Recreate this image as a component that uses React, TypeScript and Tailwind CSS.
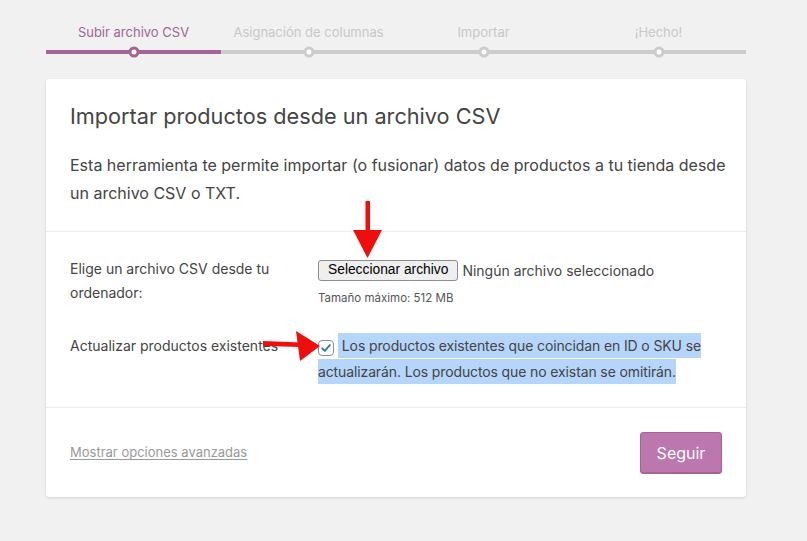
const steps = ["Subir archivo CSV", "Asignación de columnas", "Importar", "¡Hecho!"];

function Steps() {
  return (
    <div className="ml-[46px] grid w-[700px] grid-cols-4">
      {steps.map((label, i) => {
        const active = i === 0;
        return (
          <div key={label} className="flex flex-col">
            <span
              className={
                "text-center text-[13px] leading-[16px] " +
                (active ? "text-[#a46497]" : "text-[#c8c8c8]")
              }
            >
              {label}
            </span>
            <div className={"relative mt-[10px] h-[4px] " + (active ? "bg-[#a46497]" : "bg-[#cccccc]")}>
              <span
                className={
                  "absolute left-1/2 top-1/2 h-[11px] w-[11px] -translate-x-1/2 -translate-y-1/2 rounded-full border-[3px] bg-white " +
                  (active ? "border-[#a46497]" : "border-[#cccccc]")
                }
              />
            </div>
          </div>
        );
      })}
    </div>
  );
}

export default function App() {
  return (
    <div
      className="relative min-h-[541px] bg-[#f1f1f1] pt-[24px] text-[#444]"
      style={{ fontFamily: "Inter, 'Liberation Sans', sans-serif" }}
    >
      <Steps />

      {/* Card */}
      <div className="ml-[46px] mt-[25px] w-[700px] rounded-[3px] bg-white shadow-[0_1px_3px_rgba(0,0,0,0.13)]">
        <div className="px-[24px] pb-[24px] pt-[22px]">
          <h2 className="text-[21.7px] leading-[30px] text-[#444]">Importar productos desde un archivo CSV</h2>
          <p className="mt-[20px] w-[680px] text-[16px] leading-[28px] text-[#444]">
            <span className="whitespace-nowrap">
              Esta herramienta te permite importar (o fusionar) datos de productos a tu tienda desde
            </span>
            <br />
            un archivo CSV o TXT.
          </p>
        </div>

        <div className="border-t border-[#eeeeee] px-[24px] pb-[22px] pt-[25px]">
          <div className="grid grid-cols-[248px_1fr]">
            <span className="pr-[20px] text-[14px] leading-[24px]">Elige un archivo CSV desde tu ordenador:</span>
            <div className="pt-[3px]">
              <div className="flex items-center">
                <span
                  className="flex h-[21px] items-center rounded-[3px] border border-[#8e8e8e] bg-[#efefef] px-[9px] text-[13.8px] text-black"
                  style={{ fontFamily: "'Liberation Sans', Arial, sans-serif" }}
                >
                  Seleccionar archivo
                </span>
                <span className="ml-[4px] text-[14px] text-[#444]">Ningún archivo seleccionado</span>
              </div>
              <p className="mt-[9px] text-[11.5px] leading-[16px] text-[#555]">Tamaño máximo: 512 MB</p>
            </div>

            <span className="mt-[27px] text-[14px] leading-[26px]">Actualizar productos existentes</span>
            <div className="mt-[27px] text-[14px] leading-[26px]">
              <span className="relative top-[3px] mr-[4px] inline-flex h-[16px] w-[16px] items-center justify-center rounded-[4px] border border-[#8c8f94] bg-white">
                <svg width="12" height="12" viewBox="0 0 12 12" fill="none">
                  <path d="M2.2 6.3L4.8 8.8L9.9 3" stroke="#2271b1" strokeWidth="1.8" strokeLinecap="round" strokeLinejoin="round" />
                </svg>
              </span>
              <span className="box-decoration-clone bg-[#b6d5fb] py-[4px] tracking-[-0.12px]">
                {" "}Los productos existentes que coincidan en ID o SKU se actualizarán. Los productos que no existan se omitirán.
              </span>
            </div>
          </div>
        </div>

        <div className="flex items-center justify-between border-t border-[#eeeeee] px-[24px] pb-[23px] pt-[24px]">
          <a className="text-[13px] text-[#999] underline underline-offset-2">Mostrar opciones avanzadas</a>
          <button className="h-[42px] w-[82px] rounded-[3px] border border-[#a36597] bg-[#bb77ae] text-[16px] text-white shadow-[inset_0_-1px_0_#a36597]">
            Seguir
          </button>
        </div>
      </div>

      {/* Red arrows */}
      <svg className="pointer-events-none absolute left-0 top-0" width="807" height="541">
        <rect x="365.5" y="201" width="4.5" height="32" fill="#f00d0d" />
        <polygon points="353,230 382,230 367.5,258" fill="#f00d0d" />
        <polygon points="263,341 301,342.5 301,347 263,346" fill="#f00d0d" />
        <polygon points="296,331 320,346 300,361" fill="#f00d0d" />
      </svg>
    </div>
  );
}
